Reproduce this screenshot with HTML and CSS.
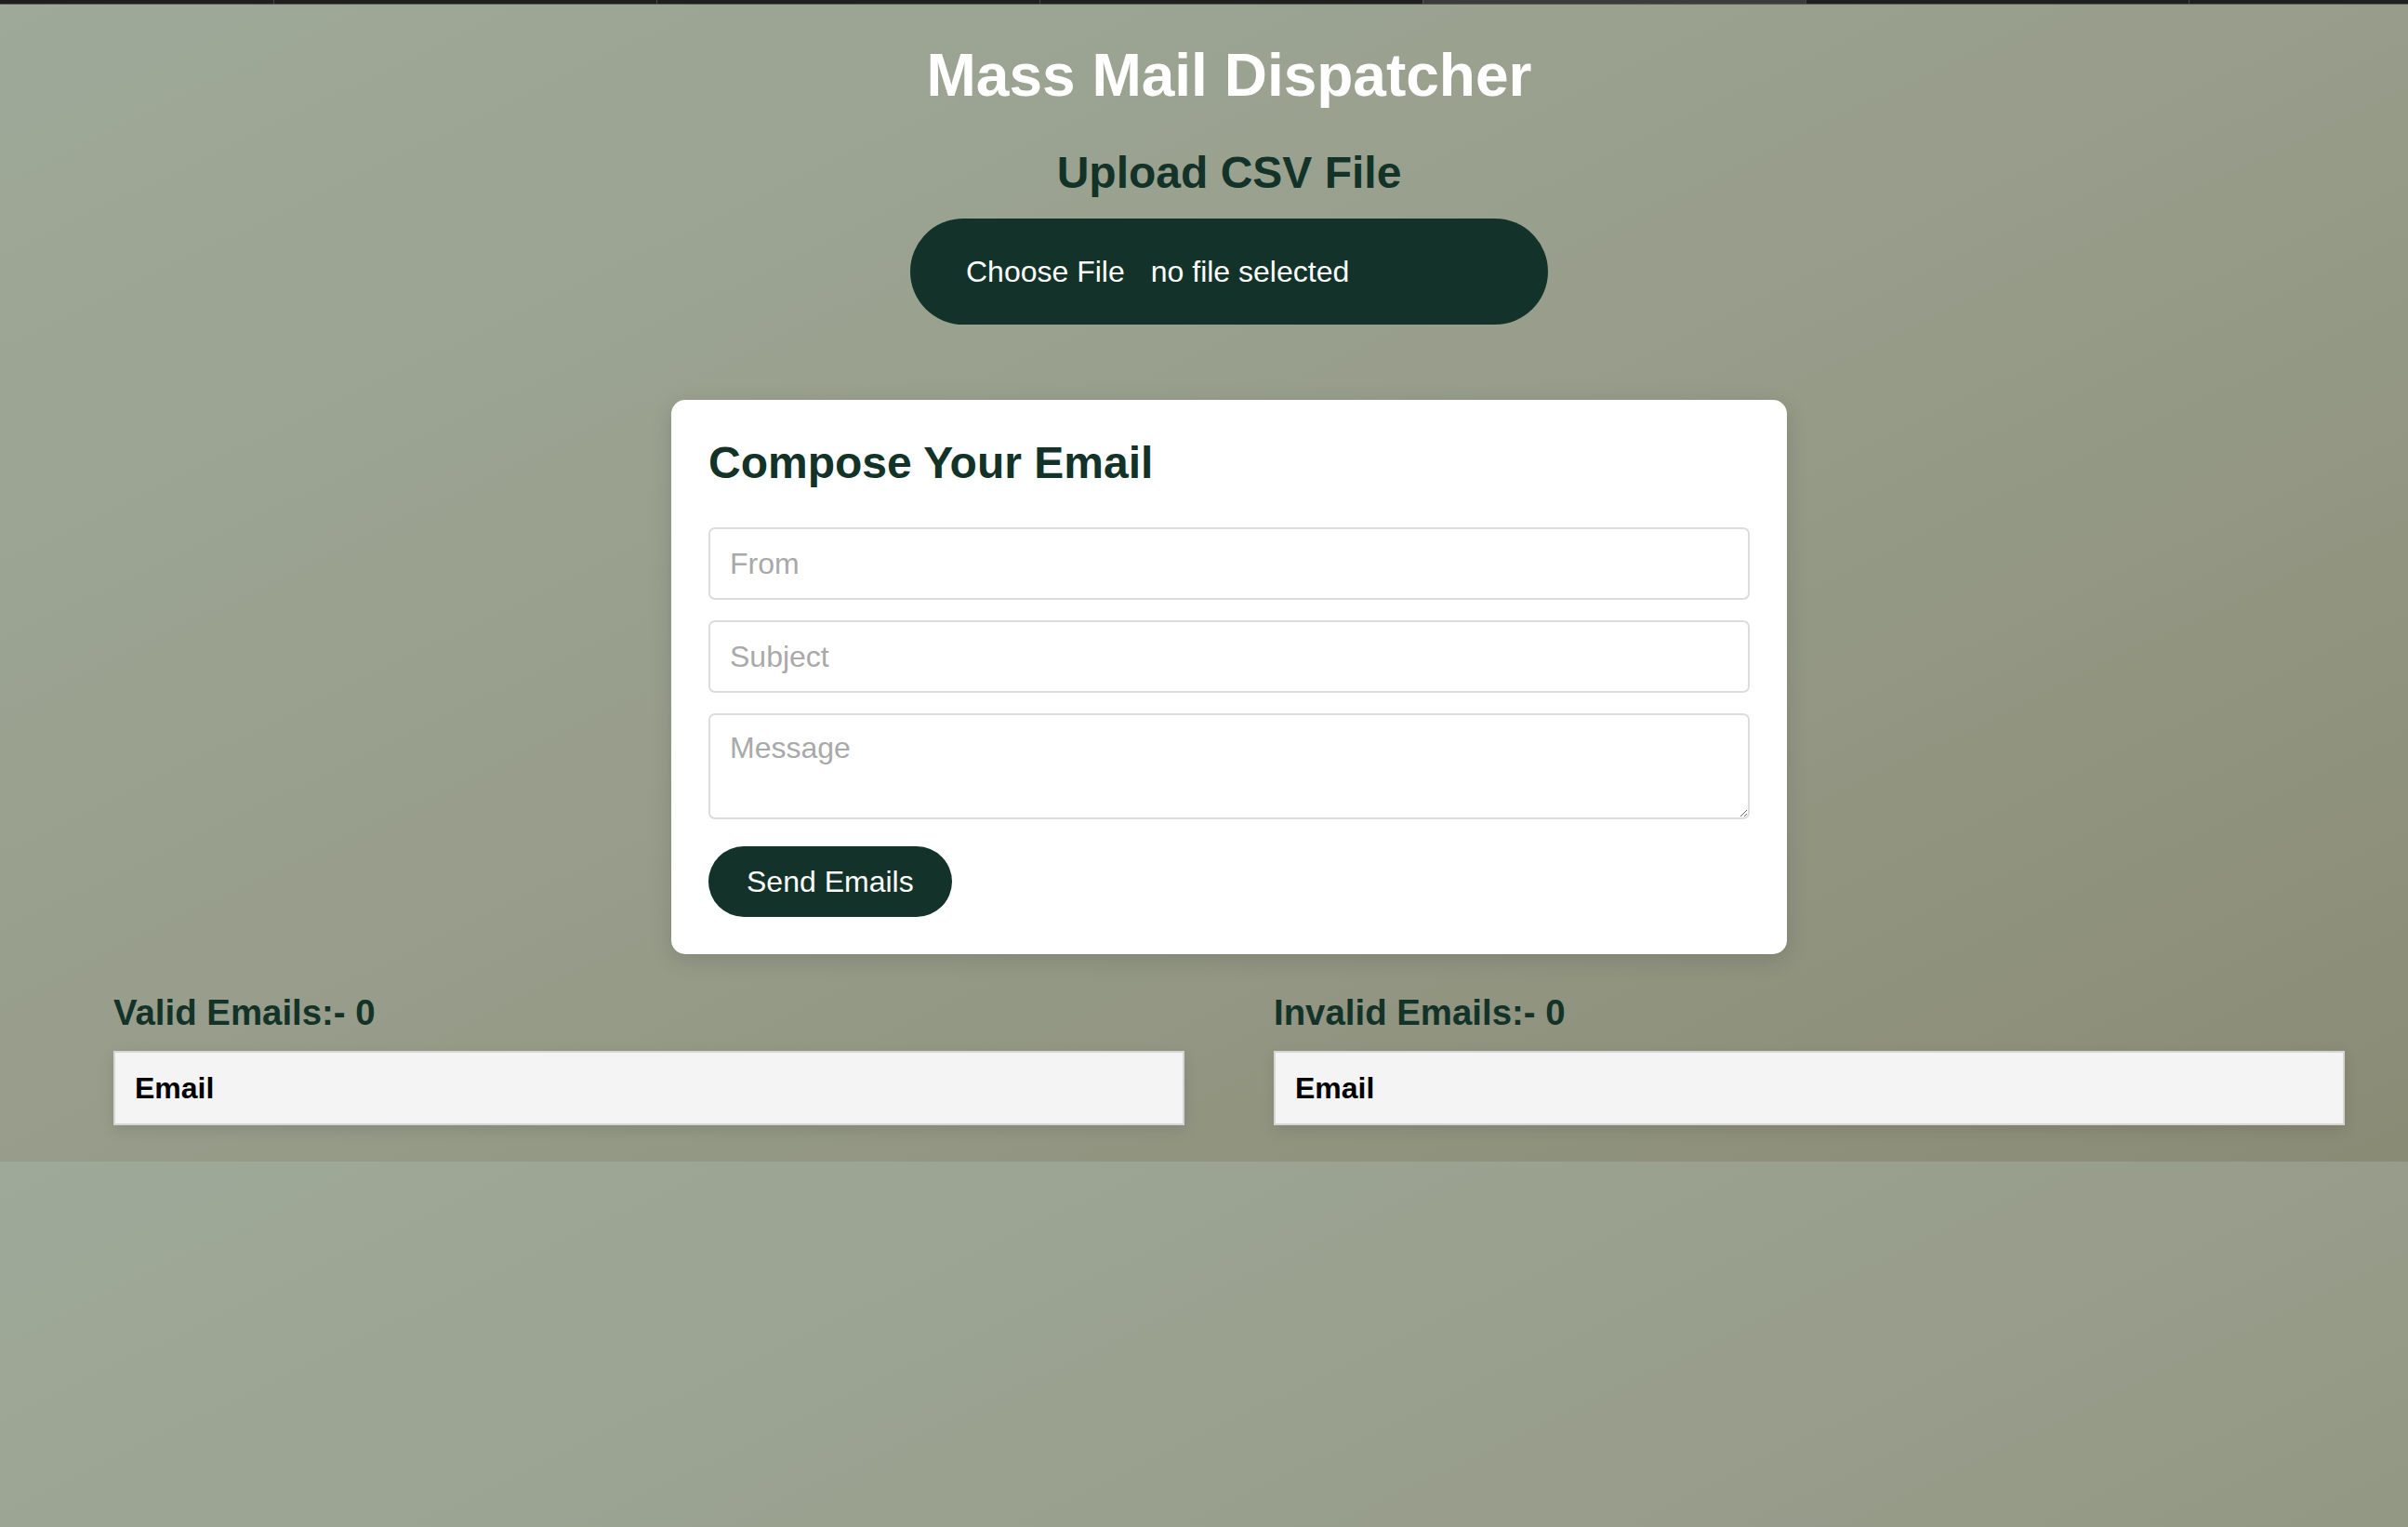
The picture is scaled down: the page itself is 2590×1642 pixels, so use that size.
FILE: index.html
```html
<!DOCTYPE html>
<html lang="en">
<head>
<meta charset="utf-8">
<title>Mass Mail Dispatcher</title>
<link rel="stylesheet" href="styles.css">
</head>
<body>
<div class="tabbar">
  <span class="tab tab-first"></span>
  <span class="tab"></span>
  <span class="tab"></span>
  <span class="tab"></span>
  <span class="tab tab-active"></span>
  <span class="tab"></span>
  <span class="tab tab-last"></span>
</div>
<main class="page">
  <h1 class="title">Mass Mail Dispatcher</h1>
  <h2 class="upload-title">Upload CSV File</h2>
  <label class="file-pill">
    <span class="file-btn">Choose File</span>
    <span class="file-name">no file selected</span>
  </label>

  <section class="card">
    <h2 class="card-title">Compose Your Email</h2>
    <input class="field" type="text" placeholder="From">
    <input class="field" type="text" placeholder="Subject">
    <textarea class="field field-area" placeholder="Message"></textarea>
    <button class="send-btn" type="button">Send Emails</button>
  </section>

  <section class="results">
    <div class="result-col">
      <h3 class="result-title">Valid Emails:- 0</h3>
      <table class="result-table">
        <thead><tr><th>Email</th></tr></thead>
      </table>
    </div>
    <div class="result-col">
      <h3 class="result-title">Invalid Emails:- 0</h3>
      <table class="result-table">
        <thead><tr><th>Email</th></tr></thead>
      </table>
    </div>
  </section>
</main>
</body>
</html>
```

FILE: styles.css
```css
* { box-sizing: border-box; }

body {
  margin: 0;
  font-family: "Liberation Sans", Arial, Helvetica, sans-serif;
  background: linear-gradient(to bottom right, #9fa999 0%, #979d8a 50%, #8a8b75 100%);
}

.tabbar {
  display: flex;
  height: 5px;
  background: #1f1f1f;
  border-bottom: 1px solid #5f6359;
}
.tab {
  width: 412px;
  height: 4px;
  background: #1f1f1f;
  border-left: 1px solid #474747;
}
.tab-first { width: 294px; border-left: none; }
.tab-active { background: #3b3b3b; border-left-color: #555; }
.tab-last { flex: 1; }

.page {
  margin-left: 54px;
  display: flex;
  flex-direction: column;
  align-items: center;
  padding-bottom: 39px;
}

.title {
  margin: 39px 0 0;
  font-size: 64px;
  line-height: 74px;
  font-weight: 700;
  color: #ffffff;
}

.upload-title {
  margin: 40px 0 0;
  font-size: 48px;
  line-height: 55px;
  font-weight: 700;
  color: #133329;
}

.file-pill {
  margin-top: 22px;
  width: 686px;
  height: 114px;
  padding: 0 60px;
  border-radius: 57px;
  background: #13332a;
  display: flex;
  align-items: center;
  gap: 28px;
  color: #ffffff;
  font-size: 32px;
  line-height: 37px;
}

.card {
  margin-top: 81px;
  width: 1200px;
  background: #ffffff;
  border-radius: 15px;
  padding: 40px 40px 40px;
  display: flex;
  flex-direction: column;
  align-items: flex-start;
  box-shadow: 0 6px 24px rgba(0, 0, 0, 0.13);
}

.card-title {
  margin: 0 0 42px;
  font-size: 48px;
  line-height: 55px;
  font-weight: 700;
  color: #133329;
}

.field {
  width: 100%;
  height: 78px;
  margin: 0 0 22px;
  padding: 0 21px;
  border: 2px solid #dcdcdc;
  border-radius: 7px;
  font-family: "Liberation Sans", Arial, sans-serif;
  font-size: 32px;
  color: #222;
  background: #fff;
  outline: none;
}
.field::placeholder { color: #a9a9a9; }

.field-area {
  height: 114px;
  margin-bottom: 29px;
  padding: 17px 21px;
  line-height: 37px;
  resize: vertical;
  display: block;
}

.send-btn {
  height: 76px;
  padding: 0 41px;
  border: none;
  border-radius: 38px;
  background: #13332a;
  color: #ffffff;
  font-family: "Liberation Sans", Arial, sans-serif;
  font-size: 32px;
  line-height: 37px;
  cursor: pointer;
}

.results {
  margin-top: 41px;
  width: 2400px;
  display: flex;
  justify-content: space-between;
}

.result-col { width: 48%; }

.result-title {
  margin: 0 0 19px;
  font-size: 38.4px;
  line-height: 44px;
  font-weight: 700;
  color: #133329;
}

.result-table {
  width: 100%;
  border-collapse: collapse;
  background: #f4f4f4;
  box-shadow: 0 5px 14px rgba(0, 0, 0, 0.1);
}
.result-table th {
  text-align: left;
  padding: 20px 21px;
  border: 2px solid #d6d6d4;
  font-size: 32px;
  line-height: 36px;
  font-weight: 700;
  color: #000;
}
```
